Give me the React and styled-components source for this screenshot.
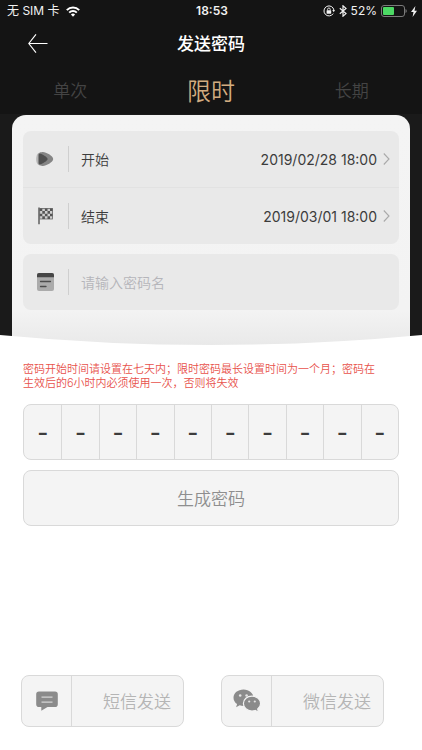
import { useState } from "react"
import styled, { createGlobalStyle } from "styled-components"

const GlobalStyle = createGlobalStyle`
  * {
    box-sizing: border-box;
  }
  body {
    margin: 0;
    background: #fff;
    font-family: Inter, "Noto Sans CJK SC", sans-serif;
    color: #3c3c3c;
  }
  button, input {
    font: inherit;
    color: inherit;
    margin: 0;
    padding: 0;
    border: 0;
    background: none;
  }
  svg {
    display: block;
    flex: none;
  }
`

const Page = styled.div`
  display: flex;
  flex-direction: column;
  min-height: 100vh;
`

const Hero = styled.div`
  position: relative;
  background: linear-gradient(#141414 114px, #1a1a1a 114px);
`

/* shallow white arc over the lower edge of the dark part */
const Curve = styled.svg`
  position: absolute;
  left: 0;
  bottom: 0;
  width: 100%;
  height: 10px;
`

const StatusBar = styled.div`
  display: grid;
  grid-template-columns: 1fr auto 1fr;
  align-items: center;
  height: 22px;
  padding: 0 5px 0 7px;
  color: #f2f2f2;
  font-size: 12px;
  line-height: 22px;
`

const StatusGroup = styled.div`
  display: flex;
  align-items: center;
  gap: ${p => p.$end ? "4px" : "6px"};
  justify-content: ${p => p.$end ? "flex-end" : "flex-start"};
`

const Clock = styled.div`
  font-weight: 600;
`

const Header = styled.header`
  display: grid;
  grid-template-columns: 1fr auto 1fr;
  align-items: center;
  height: 43px;
  padding: 0 28px;
  color: #fff;
`

const BackButton = styled.button`
  justify-self: start;
  cursor: pointer;
`

const Title = styled.h1`
  margin: 0;
  font-size: 17px;
  font-weight: 500;
  line-height: 24px;
`

const Tabs = styled.div`
  display: grid;
  grid-template-columns: 1fr 1fr 1fr;
  align-items: center;
  height: 50px;
`

const Tab = styled.button`
  height: 50px;
  padding-bottom: 2px;
  cursor: pointer;
  font-weight: 350;
  font-size: ${p => p.$active ? "24px" : "17px"};
  color: ${p => p.$active ? "#d2ac80" : "#444"};
`

const Card = styled.div`
  display: flex;
  flex-direction: column;
  gap: 10px;
  margin: 0 12px;
  padding: 16px 11px 35px;
  border-radius: 14px 14px 0 0;
  background: linear-gradient(#f4f4f4, #f3f3f3 85%, #e9e9e9);
`

const Group = styled.div`
  border-radius: 8px;
  background: #e9e9e9;
`

const rowLayout = `
  display: flex;
  align-items: center;
  width: 100%;
  height: 56px;
  padding: 0 9px 0 12px;
  font-size: 14px;
  text-align: left;
`

const RowButton = styled.button`
  ${rowLayout}
  cursor: pointer;

  & + & {
    height: 57px;
    border-top: 1px solid #e2e2e2;
  }
`

const RowField = styled.label`
  ${rowLayout}
`

const RowIcon = styled.span`
  display: flex;
  align-items: center;
  width: 34px;
  height: 26px;
  margin-right: 12px;
  border-right: 1px solid #cfcfcf;
`

const RowLabel = styled.span`
  flex: 1;
  font-weight: 350;
`

const RowValue = styled.span`
  margin-right: 6px;
`

const NameInput = styled.input`
  flex: 1;
  min-width: 0;
  outline: none;

  &::placeholder {
    color: #b5b5ba;
    font-weight: 350;
    opacity: 1;
  }
`

const Main = styled.main`
  display: flex;
  flex-direction: column;
  gap: 10px;
  padding: 17px 23px 24px;
`

const Hint = styled.p`
  margin: 0 0 4px;
  color: #e8524c;
  font-size: 11px;
  font-weight: 350;
  line-height: 14px;
`

const Code = styled.div`
  display: grid;
  grid-template-columns: repeat(10, 1fr);
  height: 56px;
  border: 1px solid #d9d9d9;
  border-radius: 8px;
  background: #f4f4f4;
`

const Digit = styled.span`
  display: flex;
  align-items: center;
  justify-content: center;
  font-size: 24px;
  font-weight: 500;

  & + & {
    border-left: 1px solid #d9d9d9;
  }
`

const GenerateButton = styled.button`
  height: 56px;
  padding-bottom: 2px;
  border: 1px solid #d9d9d9;
  border-radius: 8px;
  background: #f4f4f4;
  color: #8e8e8e;
  font-size: 17px;
  font-weight: 350;
  cursor: pointer;
`

const Footer = styled.footer`
  display: grid;
  grid-template-columns: 1fr 1fr;
  gap: 37px;
  margin-top: auto;
  padding: 0 38px 23px 21px;
`

const SendButton = styled.button`
  display: flex;
  align-items: center;
  height: 52px;
  border: 1px solid #d9d9d9;
  border-radius: 8px;
  background: #f4f4f4;
  color: #b5b5b5;
  font-size: 17px;
  font-weight: 350;
  cursor: pointer;
`

const SendIcon = styled.span`
  display: flex;
  align-items: center;
  justify-content: center;
  width: 50px;
  height: 50px;
  border-right: 1px solid #d9d9d9;
`

const SendLabel = styled.span`
  flex: 1;
  padding: 0 12px 2px 0;
  text-align: right;
  white-space: nowrap;
`

const WifiIcon = () => (
  <svg width="14" height="11" viewBox="0 0 14 11" fill="none" stroke="#fff" strokeWidth="2">
    <path d="M.8 4.1a8.8 8.8 0 0 1 12.4 0" />
    <path d="M3.2 6.6a5.4 5.4 0 0 1 7.6 0" />
    <path d="M7 10.8 4.9 8.6a3 3 0 0 1 4.2 0z" fill="#fff" stroke="none" />
  </svg>
)

const LockIcon = () => (
  <svg width="12" height="12" viewBox="0 0 12 12" fill="none" stroke="#f2f2f2">
    <path d="M10.2 8.6A5 5 0 1 1 10.9 5" />
    <path d="M9.2 5h2.8l-1.2 2.2z" fill="#f2f2f2" stroke="none" />
    <rect x="3.6" y="5.3" width="4.6" height="3.4" rx=".4" fill="#f2f2f2" stroke="none" />
    <path d="M4.6 5.4V4.3a1.3 1.3 0 0 1 2.6 0v1.1" strokeWidth=".9" />
  </svg>
)

const BluetoothIcon = () => (
  <svg width="8" height="12" viewBox="0 0 8 12" fill="none" stroke="#f2f2f2" strokeWidth="1.2">
    <path d="M.8 3.3 7 8.6 4 11.2V.8l3 2.6L.8 8.7" />
  </svg>
)

const BatteryIcon = () => (
  <svg width="26" height="12" viewBox="0 0 26 12">
    <rect x=".5" y=".5" width="23" height="11" rx="2.5" fill="none" stroke="#7b7b7b" />
    <rect x="2" y="2" width="11" height="8" rx="1" fill="#4cd964" />
    <path d="M24.5 4a2.2 2.2 0 0 1 0 4z" fill="#7b7b7b" />
  </svg>
)

const BoltIcon = () => (
  <svg width="6" height="11" viewBox="0 0 6 11">
    <path d="M4.4 0 0 6.1h2.5L1.6 11 6 4.7H3.5z" fill="#f2f2f2" />
  </svg>
)

const BackIcon = () => (
  <svg width="20" height="20" viewBox="0 0 20 20" fill="none" stroke="#fff" strokeWidth="1.1">
    <path d="M19.5 9.5H.8M8 .3.8 9.5 8 18.7" />
  </svg>
)

const ChevronIcon = () => (
  <svg width="7" height="12" viewBox="0 0 7 12" fill="none" stroke="#a9a9a9" strokeWidth="1.1">
    <path d="m.8.5 5.2 5.5L.8 11.5" />
  </svg>
)

const StartIcon = () => (
  <svg width="20" height="16" viewBox="0 0 20 16">
    <path d="M4 1.9C2 2.4 1.2 5 1.2 8S2 13.6 4 14.1z" fill="#b5b5b5" />
    <path d="M3.200 3.500C3.200 1.800 6 1 8 1c3 0 10.200 3.900 10.200 7S11 15 8 15c-2 0-4.800-.8-4.800-2.500z" fill="#858585" />
    <path d="M3.800 4.200c0-1.600 1.400-1.800 2.600-1.200 2.400 1.200 6.200 3.300 6.200 5s-3.800 3.800-6.200 5c-1.200.6-2.600.4-2.600-1.200z" fill="#505050" />
  </svg>
)

const FlagIcon = () => (
  <svg width="20" height="18" viewBox="0 0 20 18">
    <path d="M3.300.5h1.400v16.800H3.300z" fill="#555" />
    <rect x="4.700" y="1.500" width="12.800" height="10.500" fill="#cfcfcf" stroke="#666" strokeWidth=".8" />
    <path
      d="M4.700 1.500h2.600v2.600H4.700zM9.900 1.500h2.600v2.600H9.900zM15 1.500h2.500v2.600H15zM7.300 4.100h2.600v2.600H7.300zM12.500 4.100H15v2.600h-2.500zM4.700 6.700h2.600v2.600H4.700zM9.900 6.700h2.600v2.600H9.900zM15 6.700h2.500v2.600H15zM7.300 9.300h2.600V12H7.300zM12.500 9.300H15V12h-2.500z"
      fill="#555"
    />
  </svg>
)

const NoteIcon = () => (
  <svg width="20" height="18" viewBox="0 0 20 18">
    <rect x="2" y="0" width="17" height="18" rx="2" fill="#ababab" />
    <path d="M2 4.200V2a2 2 0 0 1 2-2h13a2 2 0 0 1 2 2v2.200z" fill="#464646" />
    <path d="M5.500 8.500h10M5.500 13.500h5.500" stroke="#4c4c4c" strokeWidth="1.300" strokeLinecap="round" />
  </svg>
)

const SmsIcon = () => (
  <svg width="22" height="20" viewBox="0 0 22 20">
    <path d="M3 .5h16a2.800 2.800 0 0 1 2.800 2.800v10a2.800 2.800 0 0 1-2.800 2.800h-7.500L5.300 19.700v-3.600H3A2.800 2.800 0 0 1 .2 13.300v-10A2.800 2.800 0 0 1 3 .5z" fill="#8b8b8b" />
    <path d="M5.500 6.200h11M5.500 11.200h11" stroke="#d5d5d5" strokeWidth="1.200" />
  </svg>
)

const WechatIcon = () => (
  <svg width="28" height="24" viewBox="0 0 28 24">
    <path d="M10.500.5C4.900.5.500 4.100.500 8.700c0 2.600 1.400 4.900 3.600 6.400l-1 3.100 3.600-1.900c1.200.4 2.500.6 3.800.6 5.600 0 10-3.700 10-8.200S16.100.5 10.500.5z" fill="#8b8b8b" />
    <circle cx="7.200" cy="6.500" r="1.300" fill="#e4e4e4" />
    <circle cx="13.600" cy="6.500" r="1.300" fill="#e4e4e4" />
    <path
      d="M19 7.100c4.900 0 8.600 3.300 8.600 7.400 0 2.200-1.100 4.100-2.900 5.500l.8 3.300-3.300-1.800c-1 .3-2.100.5-3.200.5-4.900 0-8.600-3.300-8.600-7.500s3.700-7.400 8.600-7.400z"
      fill="#8b8b8b"
      stroke="#f4f4f4"
      strokeWidth="1.200"
    />
    <circle cx="16.200" cy="12.500" r="1.100" fill="#e4e4e4" />
    <circle cx="21.800" cy="12.500" r="1.100" fill="#e4e4e4" />
  </svg>
)

const tabs = ["单次", "限时", "长期"]

const times = [
  { label: "开始", value: "2019/02/28 18:00", Icon: StartIcon },
  { label: "结束", value: "2019/03/01 18:00", Icon: FlagIcon },
]

function App() {
  const [active, setActive] = useState("限时")
  const [name, setName] = useState("")

  return (
    <Page>
      <GlobalStyle />
      <Hero>
        <StatusBar>
          <StatusGroup>
            <span>无 SIM 卡</span>
            <WifiIcon />
          </StatusGroup>
          <Clock>18:53</Clock>
          <StatusGroup $end>
            <LockIcon />
            <BluetoothIcon />
            <span>52%</span>
            <BatteryIcon />
            <BoltIcon />
          </StatusGroup>
        </StatusBar>
        <Header>
          <BackButton aria-label="返回"><BackIcon /></BackButton>
          <Title>发送密码</Title>
        </Header>
        <Tabs role="tablist">
          {tabs.map(tab => (
            <Tab
              key={tab}
              role="tab"
              aria-selected={tab === active}
              $active={tab === active}
              onClick={() => setActive(tab)}
            >
              {tab}
            </Tab>
          ))}
        </Tabs>
        <Card>
          <Group>
            {times.map(({ label, value, Icon }) => (
              <RowButton key={label}>
                <RowIcon><Icon /></RowIcon>
                <RowLabel>{label}</RowLabel>
                <RowValue>{value}</RowValue>
                <ChevronIcon />
              </RowButton>
            ))}
          </Group>
          <Group>
            <RowField>
              <RowIcon><NoteIcon /></RowIcon>
              <NameInput
                aria-label="密码名"
                placeholder="请输入密码名"
                value={name}
                onChange={e => setName(e.target.value)}
              />
            </RowField>
          </Group>
        </Card>
        <Curve viewBox="0 0 422 10" preserveAspectRatio="none" aria-hidden="true">
          <path d="M0 0Q211 20 422 0V10H0z" fill="#fff" />
        </Curve>
      </Hero>
      <Main>
        <Hint>
          密码开始时间请设置在七天内；限时密码最长设置时间为一个月；密码在<br />
          生效后的6小时内必须使用一次，否则将失效
        </Hint>
        <Code>
          {Array.from({ length: 10 }, (_, i) => <Digit key={i}>-</Digit>)}
        </Code>
        <GenerateButton>生成密码</GenerateButton>
      </Main>
      <Footer>
        <SendButton>
          <SendIcon><SmsIcon /></SendIcon>
          <SendLabel>短信发送</SendLabel>
        </SendButton>
        <SendButton>
          <SendIcon><WechatIcon /></SendIcon>
          <SendLabel>微信发送</SendLabel>
        </SendButton>
      </Footer>
    </Page>
  )
}

export default App
